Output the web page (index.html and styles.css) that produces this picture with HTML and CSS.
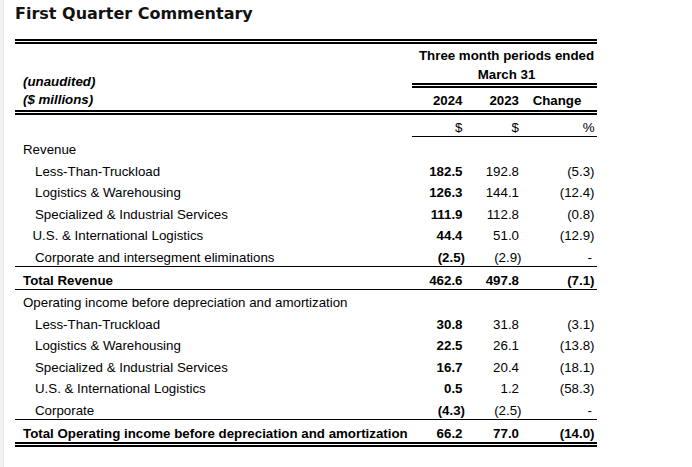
FILE: index.html
```html
<!DOCTYPE html>
<html lang="en">
<head>
<meta charset="utf-8">
<title>First Quarter Commentary</title>
<link rel="stylesheet" href="styles.css">
</head>
<body>
<div class="page">
  <h1 class="title">First Quarter Commentary</h1>
  <table class="fin">
    <colgroup>
      <col class="c-label"><col class="c-cur"><col class="c-prev"><col class="c-chg">
    </colgroup>
    <thead>
      <tr class="h1">
        <td class="lbl-head" rowspan="3"><em>(unaudited)<br>($ millions)</em></td>
        <td class="period" colspan="3">Three month periods ended</td>
      </tr>
      <tr class="h2">
        <td class="period dbl" colspan="3">March 31</td>
      </tr>
      <tr class="h3">
        <td class="num cur">2024</td>
        <td class="num prev">2023</td>
        <td class="chg-head">Change</td>
      </tr>
      <tr class="h4">
        <td></td>
        <td class="num cur reg under">$</td>
        <td class="num prev under">$</td>
        <td class="num chg under">%</td>
      </tr>
    </thead>
    <tbody>
      <tr class="sec"><td class="l0">Revenue</td><td></td><td></td><td></td></tr>
      <tr><td class="l1">Less-Than-Truckload</td><td class="num cur">182.5</td><td class="num prev">192.8</td><td class="num chg">(5.3)</td></tr>
      <tr><td class="l1">Logistics &amp; Warehousing</td><td class="num cur">126.3</td><td class="num prev">144.1</td><td class="num chg">(12.4)</td></tr>
      <tr><td class="l1">Specialized &amp; Industrial Services</td><td class="num cur">111.9</td><td class="num prev">112.8</td><td class="num chg">(0.8)</td></tr>
      <tr><td class="l1b">U.S. &amp; International Logistics</td><td class="num cur">44.4</td><td class="num prev">51.0</td><td class="num chg">(12.9)</td></tr>
      <tr class="before-total"><td class="l1">Corporate and intersegment eliminations</td><td class="num cur"><span class="neg">(2.5)</span></td><td class="num prev"><span class="neg">(2.9)</span></td><td class="num chg"><span class="dash">-</span></td></tr>
      <tr class="total"><td class="l0">Total Revenue</td><td class="num cur">462.6</td><td class="num prev">497.8</td><td class="num chg">(7.1)</td></tr>
      <tr class="sec"><td class="l0">Operating income before depreciation and amortization</td><td></td><td></td><td></td></tr>
      <tr><td class="l1">Less-Than-Truckload</td><td class="num cur">30.8</td><td class="num prev">31.8</td><td class="num chg">(3.1)</td></tr>
      <tr><td class="l1">Logistics &amp; Warehousing</td><td class="num cur">22.5</td><td class="num prev">26.1</td><td class="num chg">(13.8)</td></tr>
      <tr><td class="l1">Specialized &amp; Industrial Services</td><td class="num cur">16.7</td><td class="num prev">20.4</td><td class="num chg">(18.1)</td></tr>
      <tr><td class="l1">U.S. &amp; International Logistics</td><td class="num cur">0.5</td><td class="num prev">1.2</td><td class="num chg">(58.3)</td></tr>
      <tr class="before-total"><td class="l1">Corporate</td><td class="num cur"><span class="neg">(4.3)</span></td><td class="num prev"><span class="neg">(2.5)</span></td><td class="num chg"><span class="dash">-</span></td></tr>
      <tr class="total grand"><td class="l0">Total Operating income before depreciation and amortization</td><td class="num cur">66.2</td><td class="num prev">77.0</td><td class="num chg">(14.0)</td></tr>
    </tbody>
  </table>
</div>
</body>
</html>
```

FILE: styles.css
```css
html, body {
  margin: 0;
  padding: 0;
  background: #ffffff;
}

.page {
  min-height: 467px;
  box-sizing: border-box;
  border-left: 3px solid #f2f2f2;
  box-shadow: inset 1px 0 0 #e9e9e9;
}

.title {
  margin: 0 0 15.5px 0;
  padding: 3.5px 0 0 12px;
  font-family: "DejaVu Sans", Verdana, sans-serif;
  font-weight: bold;
  font-size: 16px;
  line-height: 20px;
  color: #111111;
}

.fin {
  margin-left: 12px;
  width: 582px;
  table-layout: fixed;
  border-collapse: separate;
  border-spacing: 0;
  font-family: "Liberation Sans", Arial, sans-serif;
  font-size: 13.3px;
  color: #000000;
}

.c-label { width: 397px; }
.c-cur { width: 54px; }
.c-prev { width: 57px; }
.c-chg { width: 74px; }

.fin td {
  padding: 5px 0 0 0;
  line-height: 16.5px;
  white-space: nowrap;
  vertical-align: top;
}

/* header */
.h1 td {
  border-top: 5px double #000;
}
.h1 .period,
.h2 .period {
  padding-top: 3.5px;
  line-height: 16px;
}
.period {
  text-align: center;
  font-weight: bold;
  padding-left: 4px !important;
}
.dbl {
  border-bottom: 5px double #000;
}
.lbl-head {
  padding: 28.5px 0 0 8px !important;
  line-height: 18.5px !important;
  font-weight: bold;
  border-bottom: 5px double #000;
}
.lbl-head em {
  font-style: italic;
}
.h3 td {
  font-weight: bold;
  border-bottom: 5px double #000;
}
.chg-head {
  text-align: center;
  padding-right: 6px !important;
}
.under {
  border-bottom: 1px solid #000;
}

/* labels */
.l0 { padding-left: 8px !important; }
.l1 { padding-left: 20px !important; }
.l1b { padding-left: 17.5px !important; }

/* numbers */
.num { text-align: right; }
.cur { padding-right: 3.5px !important; font-weight: bold; }
.cur.reg { font-weight: normal; }
.prev { padding-right: 4px !important; }
.chg { padding-right: 2.5px !important; }
.neg { margin-right: -2.5px; }
.dash { padding-right: 2.5px; }

/* totals */
.before-total td {
  border-bottom: 1px solid #000;
}
.total td {
  font-weight: bold;
  line-height: 17px;
}
.total:not(.grand) td {
  border-bottom: 1px solid #000;
}
.grand td {
  border-bottom: 5px double #000;
}
```
